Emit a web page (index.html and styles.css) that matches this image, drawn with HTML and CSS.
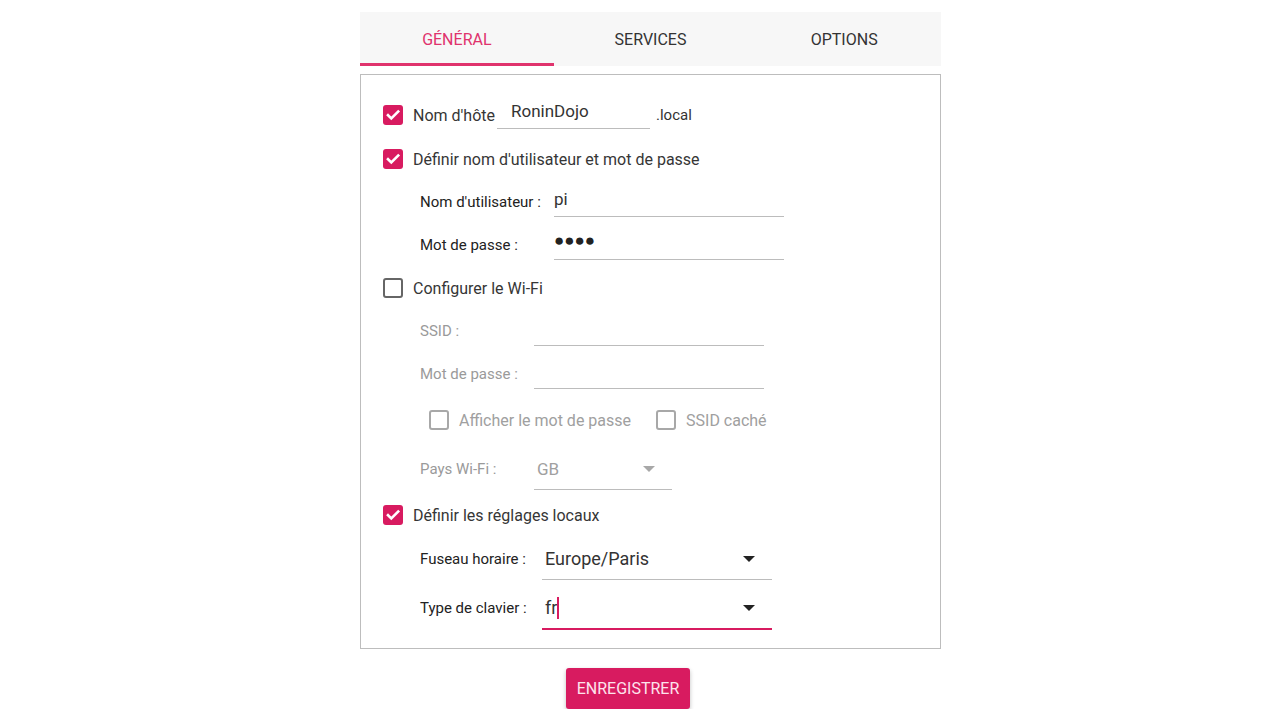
FILE: index.html
```html
<!DOCTYPE html>
<html lang="fr">
<head>
<meta charset="utf-8">
<title>Réglages</title>
<link rel="stylesheet" href="styles.css">
</head>
<body>
<div class="page">
  <nav class="tabs">
    <div class="tab active">GÉNÉRAL</div>
    <div class="tab">SERVICES</div>
    <div class="tab">OPTIONS</div>
  </nav>
  <section class="panel">
    <div class="row">
      <span class="cb checked"><svg viewBox="0 0 20 20"><path d="M5 10.2l3.3 3.3L15.2 6.6" /></svg></span>
      <span class="label">Nom d'hôte</span>
      <span class="input host"><span class="val">RoninDojo</span></span>
      <span class="suffix">.local</span>
    </div>
    <div class="row r2">
      <span class="cb checked"><svg viewBox="0 0 20 20"><path d="M5 10.2l3.3 3.3L15.2 6.6" /></svg></span>
      <span class="label">Définir nom d'utilisateur et mot de passe</span>
    </div>
    <div class="row sub">
      <span class="sublabel w-user">Nom d'utilisateur :</span>
      <span class="input wide"><span class="val">pi</span></span>
    </div>
    <div class="row sub">
      <span class="sublabel w-user">Mot de passe :</span>
      <span class="input wide"><span class="val dots">●●●●</span></span>
    </div>
    <div class="row">
      <span class="cb"></span>
      <span class="label">Configurer le Wi-Fi</span>
    </div>
    <div class="row sub disabled">
      <span class="sublabel w-wifi">SSID :</span>
      <span class="input wide"></span>
    </div>
    <div class="row sub disabled">
      <span class="sublabel w-wifi">Mot de passe :</span>
      <span class="input wide"></span>
    </div>
    <div class="row tall pair disabled">
      <span class="cb off"></span>
      <span class="label">Afficher le mot de passe</span>
      <span class="cb off second"></span>
      <span class="label">SSID caché</span>
    </div>
    <div class="row tall sub disabled">
      <span class="sublabel w-wifi">Pays Wi-Fi :</span>
      <span class="select narrow"><span class="val">GB</span><span class="arrow"></span></span>
    </div>
    <div class="row">
      <span class="cb checked"><svg viewBox="0 0 20 20"><path d="M5 10.2l3.3 3.3L15.2 6.6" /></svg></span>
      <span class="label">Définir les réglages locaux</span>
    </div>
    <div class="row tall sub r-up">
      <span class="sublabel w-loc">Fuseau horaire :</span>
      <span class="select wide"><span class="val big">Europe/Paris</span><span class="arrow"></span></span>
    </div>
    <div class="row tall sub">
      <span class="sublabel w-loc">Type de clavier :</span>
      <span class="select wide focused"><span class="val big">fr<span class="caret"></span></span><span class="arrow"></span></span>
    </div>
  </section>
  <div class="actions">
    <button class="btn">ENREGISTRER</button>
  </div>
</div>
</body>
</html>
```
FILE: styles.css
```css
* { box-sizing: border-box; }
html, body { margin: 0; padding: 0; background: #fff; }
body { font-family: Roboto, "Noto Sans", "Liberation Sans", sans-serif; color: #333; }

.page { width: 581px; margin: 12px 0 0 360px; }

.tabs { display: flex; height: 54px; background: #f7f7f7; }
.tab { flex: 1; display: flex; align-items: center; justify-content: center; font-size: 16px; color: #333; padding-top: 4px; border-bottom: 3px solid transparent; }
.tab.active { color: #e0336d; border-bottom-color: #e0336d; }

.panel { margin-top: 8px; border: 1px solid #bdbdbd; padding: 17px 22px 17px 22px; }

.row { display: flex; align-items: center; height: 40px; margin-top: 3px; }
.row.r2 { margin-top: 4px; }
.row.r-up { margin-top: 1px; }
.row.tall { height: 46px; }
.row.sub { padding-left: 37px; }
.row.pair { padding-left: 46px; }

.cb { width: 20px; height: 20px; border-radius: 3px; border: 2px solid #666; flex: none; display: flex; align-items: center; justify-content: center; }
.cb.checked { background: #d81b60; border: none; }
.cb svg { width: 20px; height: 20px; fill: none; stroke: #fff; stroke-width: 2.6; stroke-linecap: square; }
.cb.off { border-color: #a8a8a8; }
.cb.second { margin-left: 25px; }

.label { font-size: 16px; margin-left: 10px; color: #363636; white-space: nowrap; }
.disabled .label { color: #a0a0a0; }

.sublabel { font-size: 15px; color: #222; white-space: nowrap; flex: none; }
.disabled .sublabel { color: #9a9a9a; }
.w-user { width: 134px; }
.w-wifi { width: 114px; }
.w-loc { width: 122px; }

.input, .select { display: flex; align-items: center; border-bottom: 1px solid #bcbcbc; height: 30px; flex: none; position: relative; }
.input.host { width: 153px; margin-left: 2px; padding-left: 14px; margin-top: -2px; height: 30px; }
.input.wide { width: 230px; }
.suffix { font-size: 15px; margin-left: 6px; color: #333; }
.val { font-size: 17px; color: #333; padding-bottom: 6px; }
.val.dots { font-size: 17px; letter-spacing: 0; color: #222; padding-bottom: 8px; }
.disabled .val { color: #a0a0a0; }

.select { height: 42px; }
.select .val { padding-left: 3px; padding-bottom: 0; }
.select.narrow { width: 138px; }
.select.wide { width: 230px; }
.select.focused { border-bottom: 2px solid #d81b60; height: 43px; margin-top: 1px; }
.val.big { font-size: 18px; display: flex; align-items: center; }
.caret { display: inline-block; width: 2px; height: 22px; background: #d81b60; margin-left: 0; }
.arrow { position: absolute; right: 17px; top: 50%; margin-top: -3px; width: 0; height: 0; border-left: 6px solid transparent; border-right: 6px solid transparent; border-top: 6px solid #222; }
.disabled .arrow { border-top-color: #a8a8a8; }

.actions { display: flex; padding-left: 206px; margin-top: 19px; }
.btn { width: 124px; height: 41px; background: #d81b60; color: #fde3ec; border: none; border-radius: 3px; font-family: Roboto, sans-serif; font-size: 16px; box-shadow: 0 2px 4px rgba(0,0,0,0.25); padding: 0; }
```
